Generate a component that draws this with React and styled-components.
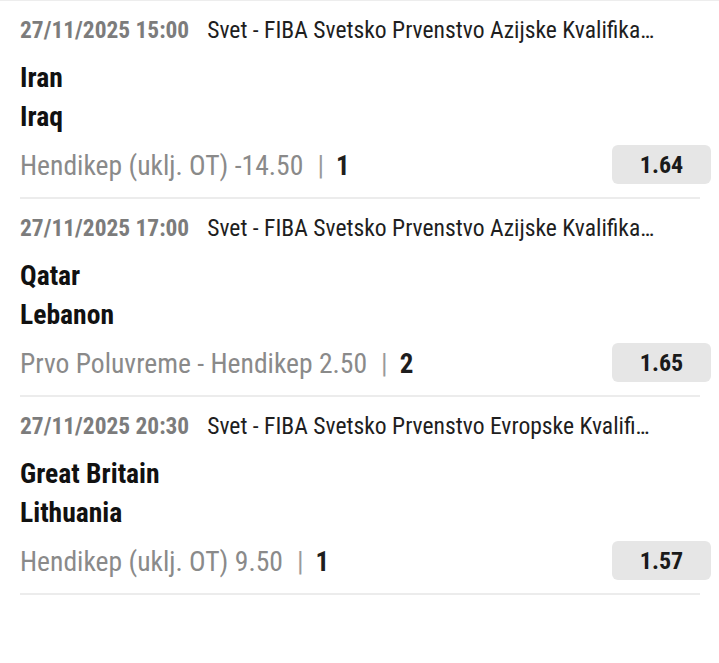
import styled, { createGlobalStyle } from "styled-components";

const matches = [
    {
        id: 1,
        time: "27/11/2025 15:00",
        league: "Svet - FIBA Svetsko Prvenstvo Azijske Kvalifika…",
        home: "Iran",
        away: "Iraq",
        market: "Hendikep (uklj. OT) -14.50",
        pick: "1",
        odd: "1.64",
    },
    {
        id: 2,
        time: "27/11/2025 17:00",
        league: "Svet - FIBA Svetsko Prvenstvo Azijske Kvalifika…",
        home: "Qatar",
        away: "Lebanon",
        market: "Prvo Poluvreme - Hendikep 2.50",
        pick: "2",
        odd: "1.65",
    },
    {
        id: 3,
        time: "27/11/2025 20:30",
        league: "Svet - FIBA Svetsko Prvenstvo Evropske Kvalifi…",
        home: "Great Britain",
        away: "Lithuania",
        market: "Hendikep (uklj. OT) 9.50",
        pick: "1",
        odd: "1.57",
    },
];

export default function App() {
    return (
        <>
            <GlobalStyle />
            <Lista>
                {matches.map(m =>
                    <Mec key={m.id}>
                        <Zaglavlje>
                            <Vreme>{m.time}</Vreme>
                            <Liga>{m.league}</Liga>
                        </Zaglavlje>
                        <Timovi>
                            <Tim>{m.home}</Tim>
                            <Tim>{m.away}</Tim>
                        </Timovi>
                        <Tip>
                            <Igra>
                                {m.market}
                                <Crta>|</Crta>
                                <Izbor>{m.pick}</Izbor>
                            </Igra>
                            <Kvota>{m.odd}</Kvota>
                        </Tip>
                    </Mec>)}
            </Lista>
        </>
    )
}

const GlobalStyle = createGlobalStyle`
body{
    margin: 0;
    background: #ffffff;
    font-family: "Roboto Condensed", "Liberation Sans Narrow", Roboto, sans-serif;
}
`

const Lista = styled.main`
border-top: 1px solid #ededed;
`

const Mec = styled.section`
margin: 0 19px 0 20px;
padding: 17px 0 13px 0;
border-bottom: 2px solid #ececec;
`

const Zaglavlje = styled.div`
display: flex;
align-items: center;
height: 24px;
white-space: nowrap;
`

const Vreme = styled.span`
flex-shrink: 0;
font-size: 23.4px;
font-weight: 700;
color: #7c7c7c;
margin-right: 18px;
`

const Liga = styled.span`
min-width: 0;
overflow: hidden;
text-overflow: ellipsis;
font-size: 23.6px;
color: #1e1e1e;
`

const Timovi = styled.div`
margin-top: 16px;
display: flex;
flex-direction: column;
`

const Tim = styled.div`
line-height: 39px;
font-size: 27.6px;
font-weight: 700;
color: #111111;
`

const Tip = styled.div`
margin-top: 9px;
display: flex;
align-items: center;
justify-content: space-between;
`

const Igra = styled.div`
display: flex;
align-items: center;
padding-top: 2px;
font-size: 27.6px;
color: #8a8a8a;
`

const Crta = styled.span`
margin: 0 12px 0 14px;
font-size: 27px;
color: #9a9a9a;
`

const Izbor = styled.span`
font-weight: 700;
font-size: 27px;
color: #1e1e1e;
`

const Kvota = styled.button`
width: 99px;
height: 39px;
margin-right: -11px;
border: none;
border-radius: 6px;
background-color: #e6e6e6;
font-family: inherit;
font-size: 24px;
font-weight: 700;
color: #1a1a1a;
`
